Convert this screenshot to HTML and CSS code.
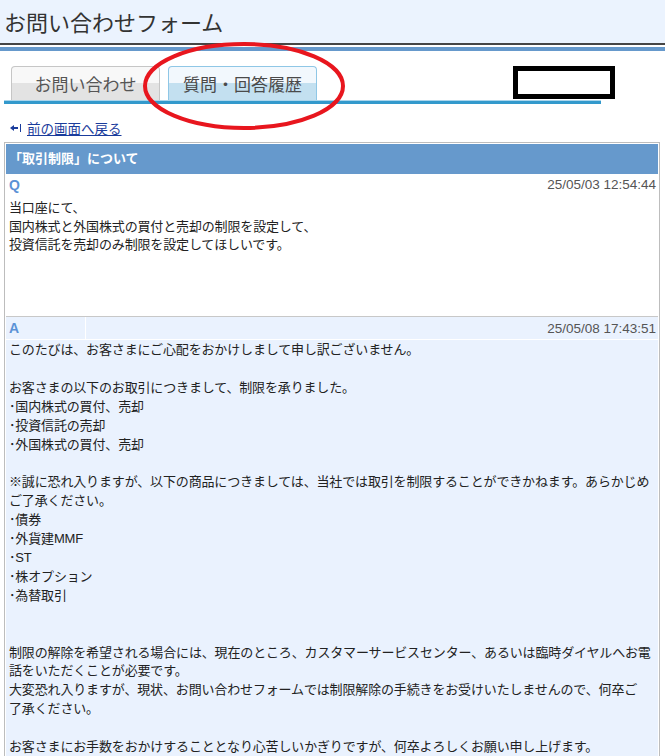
FILE: index.html
```html
<!DOCTYPE html>
<html lang="ja">
  <head>
    <meta charset="utf-8">
    <title>お問い合わせフォーム</title>
    <link rel="stylesheet" href="styles.css">
  </head>
  <body>
    <div class="page">
      <div class="site-header">
        <h1>お問い合わせフォーム</h1>
      </div>
      <div class="header-rule"></div>

      <div class="tabs">
        <a href="#" class="tab">お問い合わせ</a>
        <a href="#" class="tab tab-active">質問・回答履歴</a>
      </div>
      <div class="tab-line"></div>

      <!-- 黒枠（塗りつぶし） -->
      <div class="redact"></div>
      <!-- 赤丸 -->
      <svg class="mark" width="210" height="96" viewBox="0 0 210 96">
        <ellipse cx="104" cy="47" rx="99" ry="42" fill="none" stroke="#e8161e" stroke-width="4" />
      </svg>

      <p class="back">
        <svg width="12" height="8" viewBox="0 0 12 8">
          <polygon points="0,4 4,1 4,7" fill="#1a3c9c" />
          <rect x="4" y="3" width="4" height="2" fill="#1a3c9c" />
          <rect x="10" y="0" width="1" height="8" fill="#1a3c9c" />
        </svg>
        <a href="#">前の画面へ戻る</a>
      </p>

      <div class="qa-box">
        <div class="qa-title">「取引制限」について</div>

        <div class="q-section">
          <div class="q-head">
            <span class="qa-label">Q</span>
            <span class="qa-date">25/05/03 12:54:44</span>
          </div>
          <p class="q-body">当口座にて、<br>国内株式と外国株式の買付と売却の制限を設定して、<br>投資信託を売却のみ制限を設定してほしいです。</p>
        </div>

        <div class="a-section">
          <div class="a-head">
            <span class="qa-label a-cell">A</span>
            <span class="qa-date">25/05/08 17:43:51</span>
          </div>
          <p class="a-body">このたびは、お客さまにご心配をおかけしまして申し訳ございません。<br><br>お客さまの以下のお取引につきまして、制限を承りました。<br>･国内株式の買付、売却<br>･投資信託の売却<br>･外国株式の買付、売却<br><br>※誠に恐れ入りますが、以下の商品につきましては、当社では取引を制限することができかねます。あらかじめ<br>ご了承ください。<br>･債券<br>･外貨建MMF<br>･ST<br>･株オプション<br>･為替取引<br><br><br>制限の解除を希望される場合には、現在のところ、カスタマーサービスセンター、あるいは臨時ダイヤルへお電<br>話をいただくことが必要です。<br>大変恐れ入りますが、現状、お問い合わせフォームでは制限解除の手続きをお受けいたしませんので、何卒ご<br>了承ください。<br><br>お客さまにお手数をおかけすることとなり心苦しいかぎりですが、何卒よろしくお願い申し上げます。</p>
        </div>
      </div>
    </div>
  </body>
</html>
```

FILE: styles.css
```css
* {
  margin: 0;
  padding: 0;
  box-sizing: border-box;
}

body {
  font-family: "Liberation Sans", "Noto Sans CJK JP", sans-serif;
  font-size: 13px;
  color: #222;
  background: white;
}

.page {
  position: relative;
}

.site-header {
  height: 45px;
  background: #ebf3fe;
  border-bottom: 2px solid #454545;
}

.site-header h1 {
  font-family: "Noto Sans CJK JP", sans-serif;
  font-size: 22px;
  font-weight: normal;
  color: #333;
  line-height: 43px;
  padding-left: 4px;
}

.header-rule {
  height: 4px;
  margin-top: 2px;
  background: #6699cc;
}

.tabs {
  display: flex;
  gap: 8px;
  margin: 15px 0 0 4px;
  padding-left: 7px;
  width: 597px;
}

.tab {
  width: 149px;
  height: 34px;
  display: flex;
  align-items: center;
  justify-content: center;
  font-family: "Noto Sans CJK JP", sans-serif;
  font-size: 17px;
  color: #555;
  text-decoration: none;
  border: 1px solid #c6c6c6;
  border-bottom: none;
  border-radius: 4px 4px 0 0;
  background: linear-gradient(#f8f8f8 50%, #e3e3e3 50%);
}

.tab-active {
  border-color: #8fc7e6;
  background: linear-gradient(#f2f8fd 50%, #c3e0f0 50%);
  color: #4a4a4a;
}

.tab-line {
  width: 597px;
  margin-left: 4px;
  height: 4px;
  background: linear-gradient(#a9d5ec 1px, #3399cc 1px);
}

.redact {
  position: absolute;
  left: 513px;
  top: 66px;
  width: 102px;
  height: 33px;
  border: 5px solid #000;
  background: white;
}

.mark {
  position: absolute;
  left: 140px;
  top: 39px;
}

.back {
  display: flex;
  align-items: center;
  gap: 5px;
  margin: 16px 0 0 10px;
  height: 16px;
  font-family: "Noto Sans CJK JP", sans-serif;
  font-size: 13.5px;
}

.back a {
  color: #1a3c9c;
}

.qa-box {
  width: 656px;
  margin: 6px 0 0 4px;
  border: 1px solid #bdbdbd;
  padding: 1px;
}

.qa-title {
  height: 30px;
  line-height: 30px;
  padding-left: 3px;
  background: #6699cc;
  color: white;
  font-weight: bold;
  font-size: 13px;
}

.q-head,
.a-head {
  display: flex;
  justify-content: space-between;
  align-items: center;
  height: 21px;
  padding: 0 2px 0 3px;
}

.qa-label {
  color: #5b92d6;
  font-weight: bold;
  font-size: 14px;
}

.qa-date {
  color: #555;
  font-size: 13.5px;
}

.q-body,
.a-body {
  font-size: 13px;
  letter-spacing: -0.15px;
  white-space: nowrap;
  padding: 4px 3px 0;
}

.q-body {
  line-height: 18.6px;
  min-height: 121px;
}

.a-section {
  background: #eaf2fe;
  border-top: 1px solid #c8c8c8;
}

.a-head {
  height: 23px;
  padding-left: 0;
  border-bottom: 1px solid white;
}

.a-cell {
  width: 80px;
  height: 100%;
  display: flex;
  align-items: center;
  padding-left: 3px;
  border-right: 1px solid white;
}

.a-body {
  line-height: 18.9px;
  padding-top: 1px;
  padding-bottom: 20px;
}
```
